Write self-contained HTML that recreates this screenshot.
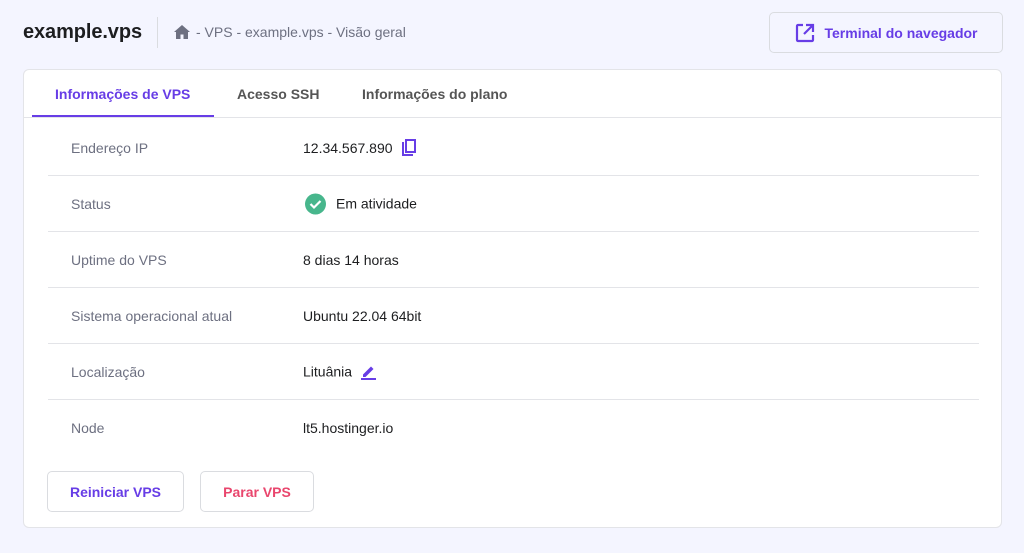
<!DOCTYPE html>
<html><head><meta charset="utf-8"><style>
*{margin:0;padding:0;box-sizing:border-box}
body{width:1024px;height:553px;background:#f4f5ff;font-family:"Liberation Sans",sans-serif;position:relative;overflow:hidden;color:#1d1e20}
.abs{position:absolute}
.title{left:23px;top:21px;font-size:20px;font-weight:bold;color:#1d1e20;letter-spacing:-0.1px}
.sep{left:157px;top:17px;width:1px;height:31px;background:#dadce0}
.bc{left:174px;top:24px;font-size:14px;color:#6d7081;display:flex;align-items:center;gap:6px}
.tbtn{left:769px;top:12px;width:234px;height:41px;border:1px solid #dadce0;border-radius:5px;background:#f4f5ff;display:flex;align-items:center;justify-content:center;gap:10px;color:#673de6;font-weight:bold;font-size:14px}
.card{left:23px;top:69px;width:979px;height:459px;background:#fff;border:1px solid #e3e4e8;border-radius:6px;overflow:hidden}
.tabs{position:absolute;left:0;top:0;width:100%;height:48px;border-bottom:1px solid #e3e4e8}
.tab{position:absolute;top:16px;font-size:14px;font-weight:bold;color:#555}
.ul{position:absolute;left:8px;top:45px;width:182px;height:2px;background:#673de6}
.row{position:absolute;left:24px;width:931px;height:56px;border-bottom:1px solid #e3e4e8;font-size:14px}
.row .l{position:absolute;left:23px;top:50%;transform:translateY(-50%);color:#6d7081}
.row .v{position:absolute;left:255px;top:50%;transform:translateY(-50%);color:#1d1e20;display:flex;align-items:center;gap:8px}
.btn{position:absolute;top:401px;height:41px;border:1px solid #dadce0;border-radius:5px;font-size:14px;font-weight:bold;display:flex;align-items:center;justify-content:center}
</style></head><body>
<div class="abs title">example.vps</div>
<div class="abs sep"></div>
<div class="abs bc"><svg width="16" height="14" viewBox="0 0 16 14"><path d="M8 0L0 7h2v7h4.5V9.5h3V14H14V7h2z" fill="#6d7081"/></svg><span>- VPS - example.vps - Visão geral</span></div>
<div class="abs tbtn"><svg width="20" height="20" viewBox="0 0 20 20" fill="none" stroke="#673de6" stroke-width="2.2"><path d="M8 2H3a1 1 0 0 0-1 1v14a1 1 0 0 0 1 1h14a1 1 0 0 0 1-1v-5"/><path d="M11 2h7v7M18 2L9 11"/></svg>Terminal do navegador</div>
<div class="abs card">
<div class="tabs">
<div class="tab" style="left:31px;color:#673de6">Informações de VPS</div>
<div class="tab" style="left:213px">Acesso SSH</div>
<div class="tab" style="left:338px">Informações do plano</div>
<div class="ul"></div>
</div>
<div class="row" style="top:50px"><span class="l">Endereço IP</span><span class="v">12.34.567.890 <svg width="16" height="18" viewBox="0 0 16 18" fill="none" stroke="#673de6" stroke-width="2"><path d="M2 3v13h10"/><rect x="5" y="1" width="9" height="12"/></svg></span></div>
<div class="row" style="top:106px"><span class="l">Status</span><span class="v" style="left:257px;gap:10px"><svg width="21" height="21" viewBox="0 0 21 21"><circle cx="10.5" cy="10.5" r="10.5" fill="#47b68c"/><path d="M5.5 10.5l3.5 3.5 6.5-6.5" stroke="#fff" stroke-width="2.2" fill="none"/></svg>Em atividade</span></div>
<div class="row" style="top:162px"><span class="l">Uptime do VPS</span><span class="v">8 dias 14 horas</span></div>
<div class="row" style="top:218px"><span class="l">Sistema operacional atual</span><span class="v">Ubuntu 22.04 64bit</span></div>
<div class="row" style="top:274px"><span class="l">Localização</span><span class="v">Lituânia <svg width="17" height="17" viewBox="0 0 17 17"><path d="M3 11l8-8 2.5 2.5-8 8H3z" fill="#673de6"/><rect x="1" y="14.5" width="15" height="2" fill="#673de6"/></svg></span></div>
<div class="row" style="top:330px;border-bottom:none"><span class="l">Node</span><span class="v">lt5.hostinger.io</span></div>
<div class="btn" style="left:23px;width:137px;color:#673de6">Reiniciar VPS</div>
<div class="btn" style="left:176px;width:114px;color:#e9466d">Parar VPS</div>
</div>
</body></html>
